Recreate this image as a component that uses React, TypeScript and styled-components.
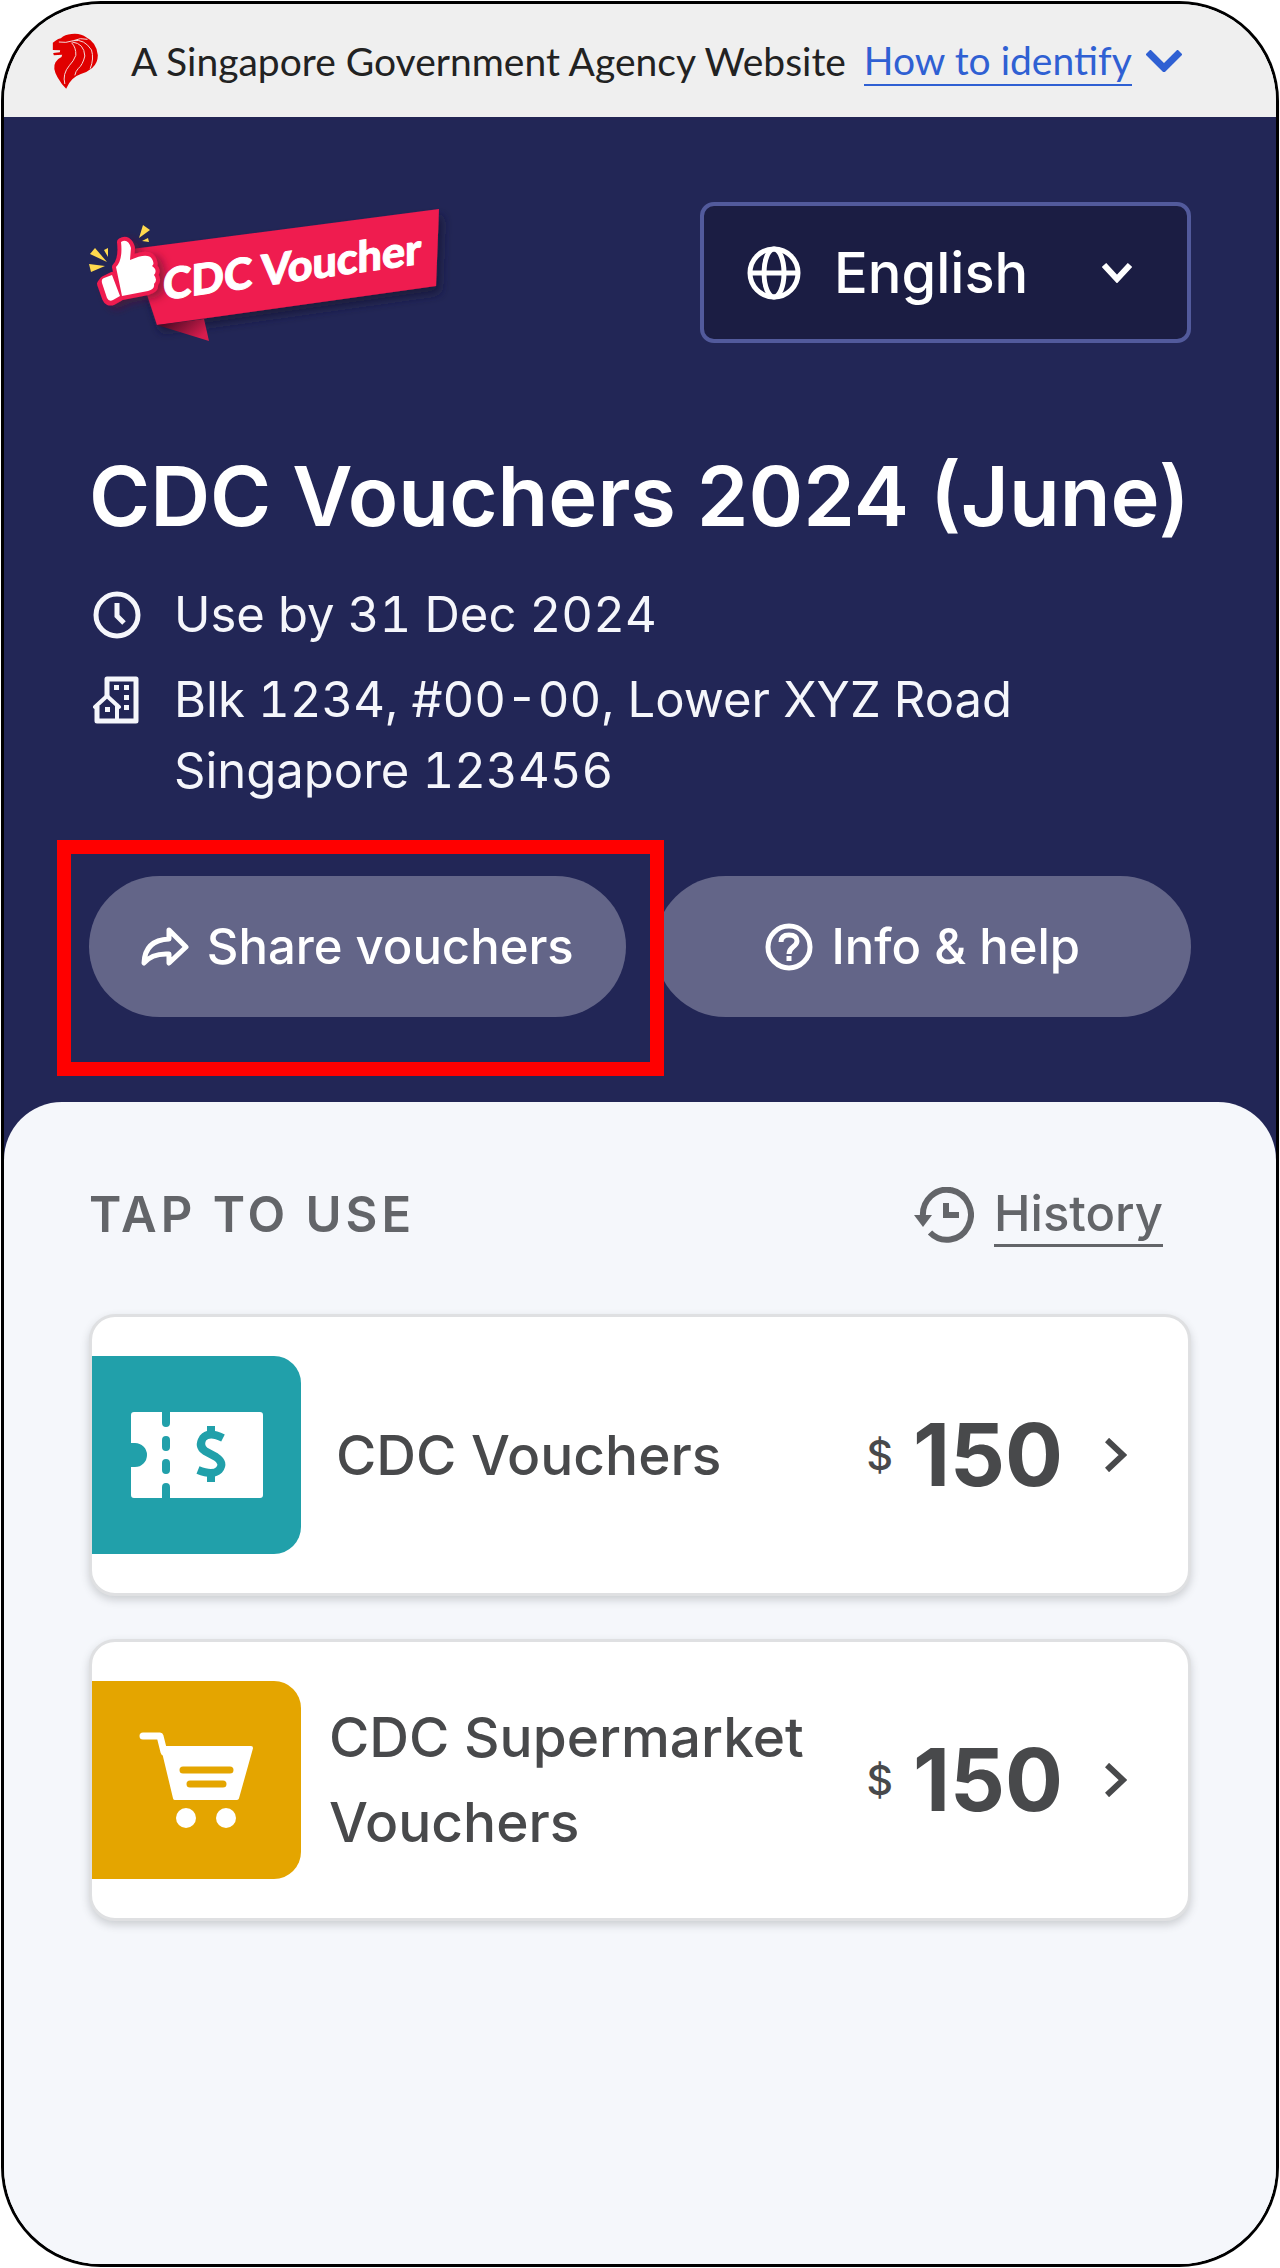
import React from "react";
import styled, { createGlobalStyle } from "styled-components";

const color = {
  navy: "#222656",
  navyDeep: "#1b1d43",
  outline: "#525a9c",
  pill: "#636588",
  surface: "#f5f7fb",
  ink: "#48494b",
  muted: "#636569",
  link: "#2f60d3",
  red: "#ff0000",
};

const GlobalStyle = createGlobalStyle`
  *, *::before, *::after { box-sizing: border-box; }
  body {
    margin: 0;
    padding: 1px;
    background: #ffffff;
    font-family: Inter, "Liberation Sans", sans-serif;
    color: ${color.ink};
  }
  button, select { font: inherit; color: inherit; }
  button { border: 0; padding: 0; background: none; cursor: pointer; }
  svg { display: block; flex: none; }
`;

const Frame = styled.div`
  display: flex;
  flex-direction: column;
  min-height: calc(100vh - 2px);
  border: 3px solid #000000;
  border-radius: 100px;
  overflow: hidden;
  background: ${color.surface};
`;

const Masthead = styled.div`
  display: flex;
  align-items: center;
  height: 113px;
  padding: 0 48px;
  background: #efefef;
  font-family: Lato, "Liberation Sans", sans-serif;
  font-size: 39px;
  line-height: 48px;
  color: #222222;
`;

const MastheadText = styled.span`
  margin-left: 32px;
`;

const IdentifyButton = styled.button`
  display: flex;
  align-items: center;
  gap: 14px;
  margin-left: 18px;
  color: ${color.link};
`;

const IdentifyLabel = styled.span`
  border-bottom: 2px solid currentColor;
`;

const Hero = styled.header`
  padding: 85px 85px 145px;
  background: ${color.navy};
  color: #ffffff;
`;

const HeroTop = styled.div`
  display: flex;
  align-items: flex-start;
  justify-content: space-between;
`;

const LanguageField = styled.label`
  display: flex;
  align-items: center;
  width: 491px;
  height: 141px;
  padding: 0 55px 0 43px;
  border: 4px solid ${color.outline};
  border-radius: 14px;
  background: ${color.navyDeep};
`;

const LanguageSelect = styled.select`
  flex: 1;
  min-width: 0;
  margin-left: 33px;
  padding: 0;
  border: 0;
  outline: 0;
  appearance: none;
  background: transparent;
  font-size: 56px;
  font-weight: 500;
  line-height: 72px;
`;

const Title = styled.h1`
  margin: 101px 0 0;
  font-size: 83px;
  font-weight: 600;
  line-height: 104px;
`;

const Facts = styled.ul`
  display: grid;
  gap: 14px;
  margin: 31px 0 0;
  padding: 0;
  list-style: none;
  font-size: 49px;
  line-height: 71px;
  font-variant-numeric: tabular-nums;
  color: #f5f6fb;
`;

const Fact = styled.li`
  display: flex;
  gap: 33px;
  padding-left: 4px;
`;

const FactIcon = styled.span`
  display: flex;
  align-items: center;
  height: 71px;
`;

const Actions = styled.div`
  display: grid;
  grid-template-columns: 1fr 1fr;
  gap: 29px;
  margin-top: 70px;
`;

const ActionSlot = styled.div`
  position: relative;
`;

const ActionButton = styled.button`
  display: flex;
  align-items: center;
  justify-content: center;
  gap: 18px;
  width: 100%;
  height: 141px;
  border-radius: 71px;
  background: ${color.pill};
  font-size: 49px;
  font-weight: 500;
  line-height: 60px;
`;

const Highlight = styled.span`
  position: absolute;
  z-index: 1;
  inset: -36px -38px -59px -32px;
  border: 14px solid ${color.red};
  pointer-events: none;
`;

const Panel = styled.main`
  flex: 1;
  margin-top: -60px;
  padding: 77px 85px 96px;
  border-radius: 58px 58px 0 0;
  background: ${color.surface};
`;

const PanelHead = styled.div`
  display: flex;
  align-items: center;
  justify-content: space-between;
  padding: 0 28px 0 0;
  color: ${color.muted};
`;

const PanelTitle = styled.h2`
  margin: 0;
  font-size: 49px;
  font-weight: 600;
  line-height: 72px;
  letter-spacing: 4px;
`;

const HistoryLink = styled.a`
  display: flex;
  align-items: center;
  gap: 20px;
  color: inherit;
  font-size: 49px;
  font-weight: 500;
  line-height: 60px;
  text-decoration: none;
`;

const HistoryLabel = styled.span`
  border-bottom: 3px solid currentColor;
`;

const Cards = styled.div`
  display: grid;
  gap: 43px;
  margin-top: 63px;
`;

const Card = styled.button`
  display: flex;
  align-items: center;
  width: 100%;
  height: 282px;
  padding-right: 61px;
  border: 3px solid #dfe0e2;
  border-radius: 26px;
  background: #ffffff;
  box-shadow: 0 4px 8px rgba(60, 62, 70, 0.22);
  text-align: left;
`;

const Tile = styled.span<{ $tone: string }>`
  display: flex;
  align-items: center;
  justify-content: center;
  flex: none;
  width: 209px;
  height: 198px;
  border-radius: 0 27px 27px 0;
  background: ${(p) => p.$tone};
`;

const CardName = styled.span<{ $inset: number }>`
  flex: 1;
  padding-left: ${(p) => p.$inset}px;
  font-size: 55px;
  font-weight: 500;
  line-height: 85px;
`;

const Amount = styled.span`
  display: flex;
  align-items: center;
  gap: 20px;
  margin-right: 42px;
  font-size: 86px;
  font-weight: 700;
  line-height: 102px;
`;

const Currency = styled.span`
  font-size: 41px;
  font-weight: 500;
  line-height: 50px;
`;

const Lion = () => (
  <svg width="47" height="56" viewBox="20 15 140 168" aria-hidden="true">
    <path
      fill="#e00000"
      d="M22 44 30 38Q38 32 46 31 58 19 78 18 106 15 122 28 154 44 157 82 157 106 140 120 126 132 106 138 76 148 62 182 48 170 36 148 20 120 30 103 36 92 48 87L50 80 25 82 23 75 43 73 44 67 22 66Z"
    />
    <g fill="none" stroke="#f4dada" strokeWidth="3">
      <path d="M40 42Q60 46 84 38 104 28 126 34" />
      <path d="M84 38Q116 32 138 66 146 92 134 122" />
      <path d="M80 42Q116 46 118 84 112 110 98 122 90 130 88 142" />
      <path d="M78 44Q92 58 91 82 84 100 72 112 50 138 58 168" />
    </g>
  </svg>
);

const Logo = () => (
  <svg width="365" height="141" viewBox="89 202 365 141" role="img" aria-label="CDC Voucher">
    <defs>
      <linearGradient id="fold" x1="0" y1="0" x2="1" y2="0.5">
        <stop offset="0.2" stopColor="#4d0b25" />
        <stop offset="1" stopColor="#d81c4d" />
      </linearGradient>
      <filter id="drop" x="-20%" y="-20%" width="140%" height="150%">
        <feDropShadow dx="4" dy="7" stdDeviation="5" floodColor="#1b1b38" floodOpacity="0.8" />
      </filter>
      <filter id="handShade" x="-30%" y="-30%" width="170%" height="170%">
        <feDropShadow dx="6" dy="3" stdDeviation="4" floodColor="#5b0e2c" floodOpacity="0.6" />
      </filter>
    </defs>
    <path fill="#ef1a50" filter="url(#drop)" d="M132 249 439 209 436 286 157 325Z" />
    <path fill="url(#fold)" d="M157 325 204 319 209 341Z" />
    <g filter="url(#handShade)">
      <g fill="#ffffff" stroke="#ef1a50" strokeWidth="8" strokeLinejoin="round">
        <path d="M116 267Q123 260 121 242 128 238 131 248L130 260Q148 252 152 259 155 264 152 266 158 270 154 275 158 280 154 284 155 289 148 291L122 296Z" />
        <path d="M104 280 112 276 120 297 113 301Q108 303 106 298L101 284Z" />
      </g>
    </g>
    <path fill="#ffffff" d="M116 267Q123 260 121 242 128 238 131 248L130 260Q148 252 152 259 155 264 152 266 158 270 154 275 158 280 154 284 155 289 148 291L122 296Z" />
    <path fill="#ffffff" d="M104 278 112 275 120 296 113 300Q109 302 107 298L102 283Q101 279 104 278Z" />
    <g fill="#ffd94e">
      <path d="M139 238 143 225 150 230Z" />
      <path d="M142 241 148 238 149 242Z" />
      <path d="M107 262 90 254 95 248Z" />
      <path d="M108 257 104 250 108 248Z" />
      <path d="M105 266 89 264 91 272Z" />
    </g>
    <text
      x="0"
      y="0"
      transform="translate(163 300) skewY(-8)"
      fill="#ffffff"
      stroke="#ffffff"
      strokeWidth="1"
      fontFamily="Lato, sans-serif"
      fontWeight="900"
      fontSize="43"
    >
      CDC Voucher
    </text>
  </svg>
);

const Globe = () => (
  <svg width="54" height="54" viewBox="0 0 54 54" fill="none" stroke="#ffffff" strokeWidth="5" aria-hidden="true">
    <circle cx="27" cy="27" r="24" />
    <ellipse cx="27" cy="27" rx="10" ry="24" />
    <path d="M3 27H51" />
  </svg>
);

const Chevron = ({ size, stroke, tone }: { size: [number, number]; stroke: number; tone: string }) => (
  <svg
    width={size[0]}
    height={size[1]}
    viewBox={`0 0 ${size[0]} ${size[1]}`}
    fill="none"
    stroke={tone}
    strokeWidth={stroke}
    aria-hidden="true"
  >
    {size[0] > size[1] ? (
      <path d={`M2 2 ${size[0] / 2} ${size[1] - 4} ${size[0] - 2} 2`} />
    ) : (
      <path d={`M2 2 ${size[0] - 4} ${size[1] / 2} 2 ${size[1] - 2}`} />
    )}
  </svg>
);

const Clock = () => (
  <svg width="48" height="48" viewBox="0 0 48 48" fill="none" stroke="#f5f6fb" strokeWidth="5" aria-hidden="true">
    <circle cx="24" cy="24" r="21" />
    <path d="M24 12V25L31 32" strokeWidth="5" />
  </svg>
);

const Building = () => (
  <svg width="48" height="48" viewBox="0 0 48 48" fill="none" stroke="#f5f6fb" strokeWidth="5" strokeLinejoin="round" aria-hidden="true">
    <path d="M14 20V3H43V45H4V30" />
    <path d="M2 31 14 20 26 31M24 29V45" strokeLinecap="round" strokeWidth="4" />
    <g fill="#f5f6fb" stroke="none">
      <path d="M21 9h5v5h-5zM31 9h5v5h-5zM31 19h5v5h-5zM31 29h5v5h-5zM12 31h5v5h-5z" />
    </g>
  </svg>
);

const Share = () => (
  <svg width="48" height="40" viewBox="0 0 48 40" fill="none" stroke="#ffffff" strokeWidth="5" strokeLinejoin="round" aria-hidden="true">
    <path d="M28 3 45 20 28 36V27Q11 26 3 36 4 13 28 12Z" />
  </svg>
);

const Help = () => (
  <svg width="48" height="48" viewBox="0 0 48 48" fill="none" stroke="#ffffff" strokeWidth="5" aria-hidden="true">
    <circle cx="24" cy="24" r="21" />
    <path d="M16 19Q16 12 24 12 32 12 32 18 32 21 28 24 24 27 24 31" />
    <path d="M24 33V38" />
  </svg>
);

const HistoryIcon = () => (
  <svg width="60" height="56" viewBox="0 0 60 56" fill="none" stroke={color.muted} aria-hidden="true">
    <path d="M9 30A24 25 0 1 1 16 45.500" strokeWidth="6" />
    <path d="M32 16V28H45" strokeWidth="6" />
    <path fill={color.muted} stroke="none" d="M0 28H18L9 40Z" />
  </svg>
);

const Ticket = () => (
  <svg width="132" height="86" viewBox="0 0 132 86" aria-hidden="true">
    <path fill="#ffffff" d="M3 0H129Q132 0 132 3V83Q132 86 129 86H3Q0 86 0 83V55H4A12 12 0 0 0 4 31H0V3Q0 0 3 0Z" />
    <path
      d="M35 -6V11M35 28V35M35 51V58M35 75V92"
      fill="none"
      stroke="#21a0aa"
      strokeWidth="8"
      strokeLinecap="round"
    />
    <path
      d="M92 26Q78 19 72 26 67 34 74 39L85 45Q94 51 88 58 82 64 67 58M80 14V24M80 60V70"
      fill="none"
      stroke="#21a0aa"
      strokeWidth="8"
    />
  </svg>
);

const Cart = () => (
  <svg width="116" height="96" viewBox="0 0 116 96" aria-hidden="true">
    <path fill="none" stroke="#ffffff" strokeWidth="7" strokeLinecap="round" strokeLinejoin="round" d="M4 4H21L25 20" />
    <path fill="#ffffff" stroke="#ffffff" strokeWidth="4" strokeLinejoin="round" d="M24 16H112L98 66H36Z" />
    <path stroke="#e4a500" strokeWidth="7" strokeLinecap="round" d="M44 38H91M51 52H84" />
    <circle cx="47" cy="86" r="10" fill="#ffffff" />
    <circle cx="87" cy="86" r="10" fill="#ffffff" />
  </svg>
);

const vouchers = [
  { name: "CDC Vouchers", amount: 150, tone: "#21a0aa", icon: <Ticket />, inset: 35 },
  { name: "CDC Supermarket Vouchers", amount: 150, tone: "#e4a500", icon: <Cart />, inset: 28 },
];

export default function App() {
  return (
    <>
      <GlobalStyle />
      <Frame>
        <Masthead>
          <Lion />
          <MastheadText>A Singapore Government Agency Website</MastheadText>
          <IdentifyButton type="button">
            <IdentifyLabel>How to identify</IdentifyLabel>
            <Chevron size={[36, 22]} stroke={7} tone={color.link} />
          </IdentifyButton>
        </Masthead>

        <Hero>
          <HeroTop>
            <Logo />
            <LanguageField>
              <Globe />
              <LanguageSelect aria-label="Language" defaultValue="en">
                <option value="en">English</option>
              </LanguageSelect>
              <Chevron size={[30, 20]} stroke={6} tone="#ffffff" />
            </LanguageField>
          </HeroTop>

          <Title>CDC Vouchers 2024 (June)</Title>

          <Facts>
            <Fact>
              <FactIcon><Clock /></FactIcon>
              <span>Use by 31 Dec 2024</span>
            </Fact>
            <Fact>
              <FactIcon><Building /></FactIcon>
              <span>
                Blk 1234, #00-00, Lower XYZ Road
                <br />
                Singapore 123456
              </span>
            </Fact>
          </Facts>

          <Actions>
            <ActionSlot>
              <ActionButton type="button">
                <Share />
                Share vouchers
              </ActionButton>
              <Highlight />
            </ActionSlot>
            <ActionSlot>
              <ActionButton type="button">
                <Help />
                Info &amp; help
              </ActionButton>
            </ActionSlot>
          </Actions>
        </Hero>

        <Panel>
          <PanelHead>
            <PanelTitle>TAP TO USE</PanelTitle>
            <HistoryLink href="#history">
              <HistoryIcon />
              <HistoryLabel>History</HistoryLabel>
            </HistoryLink>
          </PanelHead>

          <Cards>
            {vouchers.map((v) => (
              <Card type="button" key={v.name}>
                <Tile $tone={v.tone}>{v.icon}</Tile>
                <CardName $inset={v.inset}>{v.name}</CardName>
                <Amount>
                  <Currency>$</Currency>
                  {v.amount}
                </Amount>
                <Chevron size={[22, 34]} stroke={6} tone={color.ink} />
              </Card>
            ))}
          </Cards>
        </Panel>
      </Frame>
    </>
  );
}
